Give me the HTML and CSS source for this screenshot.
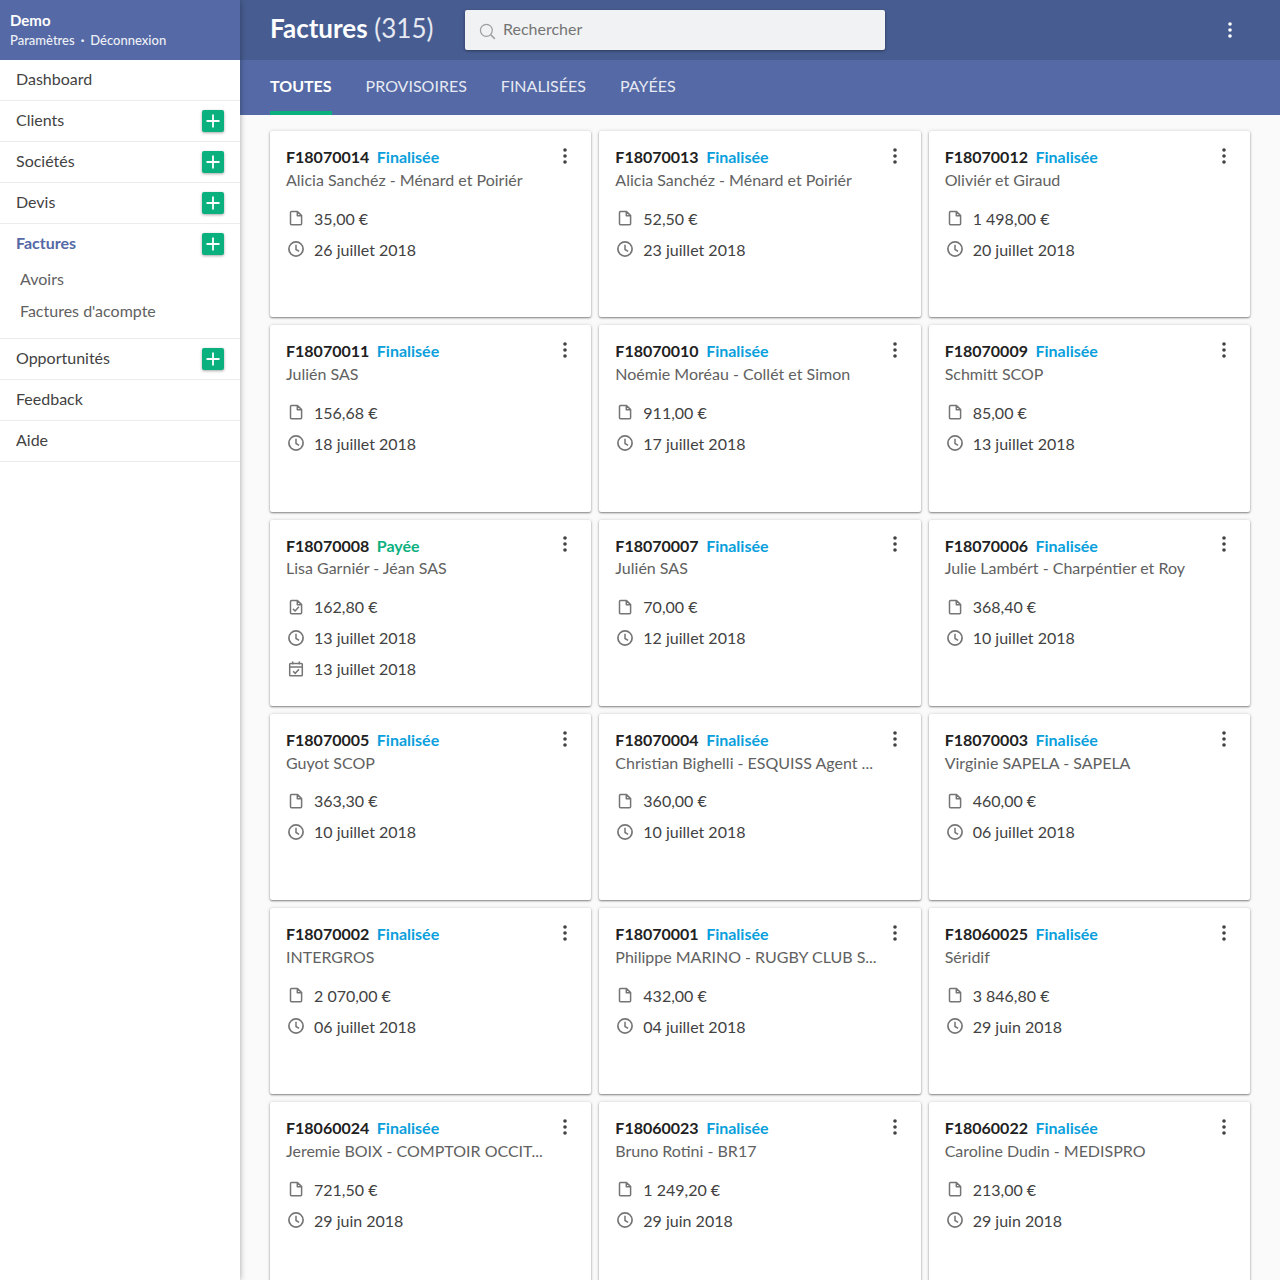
FILE: index.html
```html
<!DOCTYPE html>
<html lang="fr">
<head>
    <meta charset="UTF-8">
    <title>Factures</title>
    <link rel="stylesheet" href="styles.css">
</head>
<body>
    <svg class="sprites" width="0" height="0">
        <symbol id="i-doc" viewBox="0 0 16 16"><path d="M3.500 1.500H9.500L13.600 5.600V13.700a1 1 0 0 1-1 1H3.500a1 1 0 0 1-1-1V2.500a1 1 0 0 1 1-1zM9.300 1.500V5.800H13.600" fill="none" stroke="currentColor" stroke-width="1.500" stroke-linejoin="round"/></symbol>
        <symbol id="i-doc-check" viewBox="0 0 16 16"><path d="M3.500 1.500H9.500L13.600 5.600V13.700a1 1 0 0 1-1 1H3.500a1 1 0 0 1-1-1V2.500a1 1 0 0 1 1-1zM9.300 1.500V5.800H13.600M5 9.900l2.100 2.100 3.800-4.200" fill="none" stroke="currentColor" stroke-width="1.500" stroke-linejoin="round"/></symbol>
        <symbol id="i-clock" viewBox="0 0 16 16"><circle cx="8" cy="8" r="7.100" fill="none" stroke="currentColor" stroke-width="1.700"/><path d="M8 3.800V8.500l3.100 1.800" fill="none" stroke="currentColor" stroke-width="1.500"/></symbol>
        <symbol id="i-cal" viewBox="0 0 16 16"><path d="M2.500 2.500H13.500a.8.8 0 0 1 .8.8V14a.8.8 0 0 1-.8.8H2.500a.8.8 0 0 1-.8-.8V3.300a.8.8 0 0 1 .8-.8zM1.700 5.900H14.300M4.700 0.500V3.500M11.300 0.500V3.500M5.100 10.200l2.100 2.100 3.800-4.100" fill="none" stroke="currentColor" stroke-width="1.500"/></symbol>
        <symbol id="i-dots" viewBox="0 0 4 16"><circle cx="2" cy="2" r="1.800"/><circle cx="2" cy="8" r="1.800"/><circle cx="2" cy="14" r="1.800"/></symbol>
        <symbol id="i-plus" viewBox="0 0 22 22"><path d="M11 4.500v13M4.500 11h13" stroke="#fff" stroke-width="1.800" fill="none"/></symbol>
    </svg>

    <aside class="sidebar">
        <div class="account">
            <div class="account-name">Demo</div>
            <div class="account-links">Paramètres<span class="dot">·</span>Déconnexion</div>
        </div>
        <nav>
            <div class="nav-item"><span>Dashboard</span></div>
            <div class="nav-item"><span>Clients</span><a class="add"><svg><use href="#i-plus"/></svg></a></div>
            <div class="nav-item"><span>Sociétés</span><a class="add"><svg><use href="#i-plus"/></svg></a></div>
            <div class="nav-item"><span>Devis</span><a class="add"><svg><use href="#i-plus"/></svg></a></div>
            <div class="nav-group">
                <div class="nav-item active"><span>Factures</span><a class="add"><svg><use href="#i-plus"/></svg></a></div>
                <div class="sub-item">Avoirs</div>
                <div class="sub-item">Factures d'acompte</div>
            </div>
            <div class="nav-item"><span>Opportunités</span><a class="add"><svg><use href="#i-plus"/></svg></a></div>
            <div class="nav-item"><span>Feedback</span></div>
            <div class="nav-item"><span>Aide</span></div>
        </nav>
    </aside>

    <div class="main">
        <header class="topbar">
            <h1><b>Factures</b> (315)</h1>
            <div class="search">
                <svg viewBox="0 0 18 18"><circle cx="7.800" cy="7.800" r="6.300" fill="none" stroke="currentColor" stroke-width="1.300"/><path d="M12.400 12.400l4.400 4.400" stroke="currentColor" stroke-width="1.600"/></svg>
                <span>Rechercher</span>
            </div>
            <svg class="top-menu"><use href="#i-dots"/></svg>
        </header>
        <div class="tabs">
            <a class="tab current">TOUTES</a>
            <a class="tab">PROVISOIRES</a>
            <a class="tab">FINALISÉES</a>
            <a class="tab">PAYÉES</a>
        </div>

        <div class="cards">
            <div class="card">
                <div class="card-head"><b>F18070014</b><span class="status">Finalisée</span><svg class="card-menu"><use href="#i-dots"/></svg></div>
                <div class="client">Alicia Sanchéz - Ménard et Poiriér</div>
                <div class="row first"><svg><use href="#i-doc"/></svg>35,00 €</div>
                <div class="row"><svg><use href="#i-clock"/></svg>26 juillet 2018</div>
            </div>
            <div class="card">
                <div class="card-head"><b>F18070013</b><span class="status">Finalisée</span><svg class="card-menu"><use href="#i-dots"/></svg></div>
                <div class="client">Alicia Sanchéz - Ménard et Poiriér</div>
                <div class="row first"><svg><use href="#i-doc"/></svg>52,50 €</div>
                <div class="row"><svg><use href="#i-clock"/></svg>23 juillet 2018</div>
            </div>
            <div class="card">
                <div class="card-head"><b>F18070012</b><span class="status">Finalisée</span><svg class="card-menu"><use href="#i-dots"/></svg></div>
                <div class="client">Oliviér et Giraud</div>
                <div class="row first"><svg><use href="#i-doc"/></svg>1 498,00 €</div>
                <div class="row"><svg><use href="#i-clock"/></svg>20 juillet 2018</div>
            </div>
            <div class="card">
                <div class="card-head"><b>F18070011</b><span class="status">Finalisée</span><svg class="card-menu"><use href="#i-dots"/></svg></div>
                <div class="client">Julién SAS</div>
                <div class="row first"><svg><use href="#i-doc"/></svg>156,68 €</div>
                <div class="row"><svg><use href="#i-clock"/></svg>18 juillet 2018</div>
            </div>
            <div class="card">
                <div class="card-head"><b>F18070010</b><span class="status">Finalisée</span><svg class="card-menu"><use href="#i-dots"/></svg></div>
                <div class="client">Noémie Moréau - Collét et Simon</div>
                <div class="row first"><svg><use href="#i-doc"/></svg>911,00 €</div>
                <div class="row"><svg><use href="#i-clock"/></svg>17 juillet 2018</div>
            </div>
            <div class="card">
                <div class="card-head"><b>F18070009</b><span class="status">Finalisée</span><svg class="card-menu"><use href="#i-dots"/></svg></div>
                <div class="client">Schmitt SCOP</div>
                <div class="row first"><svg><use href="#i-doc"/></svg>85,00 €</div>
                <div class="row"><svg><use href="#i-clock"/></svg>13 juillet 2018</div>
            </div>
            <div class="card">
                <div class="card-head"><b>F18070008</b><span class="status paid">Payée</span><svg class="card-menu"><use href="#i-dots"/></svg></div>
                <div class="client">Lisa Garniér - Jéan SAS</div>
                <div class="row first"><svg><use href="#i-doc-check"/></svg>162,80 €</div>
                <div class="row"><svg><use href="#i-clock"/></svg>13 juillet 2018</div>
                <div class="row"><svg><use href="#i-cal"/></svg>13 juillet 2018</div>
            </div>
            <div class="card">
                <div class="card-head"><b>F18070007</b><span class="status">Finalisée</span><svg class="card-menu"><use href="#i-dots"/></svg></div>
                <div class="client">Julién SAS</div>
                <div class="row first"><svg><use href="#i-doc"/></svg>70,00 €</div>
                <div class="row"><svg><use href="#i-clock"/></svg>12 juillet 2018</div>
            </div>
            <div class="card">
                <div class="card-head"><b>F18070006</b><span class="status">Finalisée</span><svg class="card-menu"><use href="#i-dots"/></svg></div>
                <div class="client">Julie Lambért - Charpéntier et Roy</div>
                <div class="row first"><svg><use href="#i-doc"/></svg>368,40 €</div>
                <div class="row"><svg><use href="#i-clock"/></svg>10 juillet 2018</div>
            </div>
            <div class="card">
                <div class="card-head"><b>F18070005</b><span class="status">Finalisée</span><svg class="card-menu"><use href="#i-dots"/></svg></div>
                <div class="client">Guyot SCOP</div>
                <div class="row first"><svg><use href="#i-doc"/></svg>363,30 €</div>
                <div class="row"><svg><use href="#i-clock"/></svg>10 juillet 2018</div>
            </div>
            <div class="card">
                <div class="card-head"><b>F18070004</b><span class="status">Finalisée</span><svg class="card-menu"><use href="#i-dots"/></svg></div>
                <div class="client">Christian Bighelli - ESQUISS Agent ...</div>
                <div class="row first"><svg><use href="#i-doc"/></svg>360,00 €</div>
                <div class="row"><svg><use href="#i-clock"/></svg>10 juillet 2018</div>
            </div>
            <div class="card">
                <div class="card-head"><b>F18070003</b><span class="status">Finalisée</span><svg class="card-menu"><use href="#i-dots"/></svg></div>
                <div class="client">Virginie SAPELA - SAPELA</div>
                <div class="row first"><svg><use href="#i-doc"/></svg>460,00 €</div>
                <div class="row"><svg><use href="#i-clock"/></svg>06 juillet 2018</div>
            </div>
            <div class="card">
                <div class="card-head"><b>F18070002</b><span class="status">Finalisée</span><svg class="card-menu"><use href="#i-dots"/></svg></div>
                <div class="client">INTERGROS</div>
                <div class="row first"><svg><use href="#i-doc"/></svg>2 070,00 €</div>
                <div class="row"><svg><use href="#i-clock"/></svg>06 juillet 2018</div>
            </div>
            <div class="card">
                <div class="card-head"><b>F18070001</b><span class="status">Finalisée</span><svg class="card-menu"><use href="#i-dots"/></svg></div>
                <div class="client">Philippe MARINO - RUGBY CLUB S...</div>
                <div class="row first"><svg><use href="#i-doc"/></svg>432,00 €</div>
                <div class="row"><svg><use href="#i-clock"/></svg>04 juillet 2018</div>
            </div>
            <div class="card">
                <div class="card-head"><b>F18060025</b><span class="status">Finalisée</span><svg class="card-menu"><use href="#i-dots"/></svg></div>
                <div class="client">Séridif</div>
                <div class="row first"><svg><use href="#i-doc"/></svg>3 846,80 €</div>
                <div class="row"><svg><use href="#i-clock"/></svg>29 juin 2018</div>
            </div>
            <div class="card">
                <div class="card-head"><b>F18060024</b><span class="status">Finalisée</span><svg class="card-menu"><use href="#i-dots"/></svg></div>
                <div class="client">Jeremie BOIX - COMPTOIR OCCIT...</div>
                <div class="row first"><svg><use href="#i-doc"/></svg>721,50 €</div>
                <div class="row"><svg><use href="#i-clock"/></svg>29 juin 2018</div>
            </div>
            <div class="card">
                <div class="card-head"><b>F18060023</b><span class="status">Finalisée</span><svg class="card-menu"><use href="#i-dots"/></svg></div>
                <div class="client">Bruno Rotini - BR17</div>
                <div class="row first"><svg><use href="#i-doc"/></svg>1 249,20 €</div>
                <div class="row"><svg><use href="#i-clock"/></svg>29 juin 2018</div>
            </div>
            <div class="card">
                <div class="card-head"><b>F18060022</b><span class="status">Finalisée</span><svg class="card-menu"><use href="#i-dots"/></svg></div>
                <div class="client">Caroline Dudin - MEDISPRO</div>
                <div class="row first"><svg><use href="#i-doc"/></svg>213,00 €</div>
                <div class="row"><svg><use href="#i-clock"/></svg>29 juin 2018</div>
            </div>
        </div>
    </div>
</body>
</html>
```

FILE: styles.css
```css
html, body {
    margin: 0;
    height: 100%;
    overflow: hidden;
}
body {
    display: flex;
    background-color: #fafafa;
    color: #424242;
    font-family: Lato, "Open Sans", sans-serif;
    font-size: 16px;
}
.sprites {
    position: absolute;
}

/* Sidebar */
.sidebar {
    width: 240px;
    flex: none;
    background-color: #fff;
    box-shadow: 0 0 6px rgba(0, 0, 0, 0.35);
    position: relative;
    z-index: 2;
}
.account {
    height: 60px;
    box-sizing: border-box;
    padding: 11px 10px 0;
    background-color: #5469a5;
    color: #fff;
}
.account-name {
    font-size: 15px;
    font-weight: 700;
    line-height: 18px;
}
.account-links {
    font-size: 13px;
    font-weight: 500;
    line-height: 18px;
    margin-top: 2px;
    color: #eef0f7;
}
.dot {
    margin: 0 6px;
    font-weight: 900;
}
.nav-item {
    height: 40px;
    padding: 0 16px;
    display: flex;
    align-items: center;
    justify-content: space-between;
    border-bottom: 1px solid #ececec;
}
.nav-item span {
    margin-bottom: 4px;
}
.nav-group {
    height: 114px;
    border-bottom: 1px solid #ececec;
}
.nav-group .nav-item {
    border-bottom: none;
}
.active {
    color: #5469a5;
    font-weight: 700;
}
.sub-item {
    height: 32px;
    line-height: 30px;
    padding-left: 20px;
    color: #616161;
}
.add {
    width: 22px;
    height: 22px;
    border-radius: 2px;
    background-color: #0bb07f;
    box-shadow: 0 1px 3px rgba(0, 0, 0, 0.35);
}
.add svg {
    display: block;
    width: 22px;
    height: 22px;
}

/* Header */
.main {
    flex: 1;
    min-width: 0;
}
.topbar {
    height: 60px;
    background-color: #475c90;
    display: flex;
    align-items: center;
    padding-left: 30px;
}
h1 {
    margin: 0 0 4px;
    width: 195px;
    font-size: 26px;
    font-weight: 400;
    color: #e6e9f2;
}
h1 b {
    font-weight: 700;
    color: #fff;
}
.search {
    width: 420px;
    height: 40px;
    box-sizing: border-box;
    display: flex;
    align-items: center;
    gap: 7px;
    padding-left: 14px;
    background-color: #f1f2f4;
    border-radius: 2px;
    color: #757575;
    box-shadow: 0 1px 3px rgba(0, 0, 0, 0.4);
}
.search span {
    margin-bottom: 4px;
}
.search svg {
    width: 17px;
    height: 17px;
    margin-top: 3px;
    color: #9e9e9e;
}
.top-menu {
    width: 4px;
    height: 16px;
    margin-left: auto;
    margin-right: 48px;
    fill: #fff;
}
.tabs {
    height: 55px;
    background-color: #5469a5;
    display: flex;
    gap: 34px;
    padding-left: 30px;
}
.tab {
    height: 55px;
    box-sizing: border-box;
    line-height: 51px;
    color: #e6e9f2;
}
.tab.current {
    color: #fff;
    font-weight: 700;
    border-bottom: 4px solid #0bb07f;
}

/* Cards */
.cards {
    display: grid;
    grid-template-columns: repeat(3, 1fr);
    grid-auto-rows: 186.25px;
    column-gap: 8px;
    row-gap: 8px;
    padding: 16px 30px 0;
}
.card {
    background-color: #fff;
    padding: 15.5px 16px 0;
    box-shadow: 0 1px 2px rgba(0, 0, 0, 0.45), 0 0 4px rgba(0, 0, 0, 0.12);
    border-radius: 2px;
}
.card-head {
    display: flex;
    align-items: center;
    height: 20px;
    color: #212121;
}
.card-head b {
    font-weight: 700;
}
.status {
    margin-left: 7.5px;
    font-weight: 700;
    color: #0a9fdc;
}
.status.paid {
    color: #0bb07f;
}
.card-menu {
    width: 4px;
    height: 16px;
    margin-left: auto;
    margin-right: 8px;
    margin-top: -1.5px;
    fill: #424242;
}
.client {
    height: 20px;
    line-height: 20px;
    margin-top: 3.25px;
    color: #616161;
}
.row {
    display: flex;
    align-items: center;
    height: 20px;
    margin-top: 11px;
}
.row.first {
    margin-top: 18.25px;
}
.row svg {
    width: 16px;
    height: 16px;
    margin: 0 10px 0 2px;
    color: #757575;
}
```
